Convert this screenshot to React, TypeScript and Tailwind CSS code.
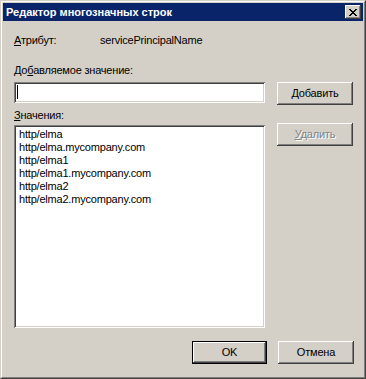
const raised =
  'shadow-[inset_-1px_-1px_#404040,inset_1px_1px_#ffffff,inset_-2px_-2px_#808080,inset_2px_2px_#d4d0c8]';
const sunken =
  'shadow-[inset_1px_1px_#808080,inset_-1px_-1px_#ffffff,inset_2px_2px_#404040,inset_-2px_-2px_#d4d0c8]';

const values = [
  'http/elma',
  'http/elma.mycompany.com',
  'http/elma1',
  'http/elma1.mycompany.com',
  'http/elma2',
  'http/elma2.mycompany.com',
];

const CloseGlyph = () => (
  <svg width="8" height="7" viewBox="0 0 8 7" shapeRendering="crispEdges">
    <path
      fill="#000"
      d="M0 0h2v1H0zM6 0h2v1H6zM1 1h2v1H1zM5 1h2v1H5zM2 2h4v1H2zM3 3h2v1H3zM2 4h4v1H2zM1 5h2v1H1zM5 5h2v1H5zM0 6h2v1H0zM6 6h2v1H6z"
    />
  </svg>
);

const Button = ({
  children,
  disabled,
  isDefault,
  className = '',
}: {
  children: React.ReactNode;
  disabled?: boolean;
  isDefault?: boolean;
  className?: string;
}) => {
  if (isDefault) {
    return (
      <div className={`h-[23px] w-[75px] border border-black ${className}`}>
        <div className="flex h-full w-full items-center justify-center bg-[#d4d0c8] shadow-[inset_-1px_-1px_#404040,inset_1px_1px_#ffffff,inset_-2px_-2px_#808080]">
          {children}
        </div>
      </div>
    );
  }
  return (
    <div
      className={`flex h-[23px] w-[76px] items-center justify-center bg-[#d4d0c8] ${raised} ${
        disabled ? 'text-[#808080] [text-shadow:1px_1px_0_#ffffff]' : ''
      } ${className}`}
    >
      {children}
    </div>
  );
};

const App = () => {
  return (
    <div
      className="h-[379px] w-[366px] border border-t-[#d4d0c8] border-l-[#d4d0c8] border-b-[#404040] border-r-[#404040] text-[11px] leading-[13px] text-black"
      style={{ fontFamily: '"Liberation Sans", Arial, sans-serif' }}
    >
      <div className="h-full w-full border border-t-white border-l-white border-b-[#808080] border-r-[#808080] bg-[#d4d0c8] p-[1px]">
        {/* title bar */}
        <div className="flex h-[18px] items-center justify-between bg-[#0a246a] pl-[3px] pr-[2px]">
          <span className="font-bold text-white">Редактор многозначных строк</span>
          <div className={`flex h-[14px] w-[16px] items-center justify-center bg-[#d4d0c8] ${raised}`}>
            <CloseGlyph />
          </div>
        </div>

        {/* client */}
        <div className="flex flex-col pl-[11px] pt-[13px] tracking-[-0.2px]">
          <div className="flex">
            <span className="w-[86px]">
              <u>А</u>трибут:
            </span>
            <span>servicePrincipalName</span>
          </div>

          <div className="mt-[17px]">
            До<u>б</u>авляемое значение:
          </div>

          <div className="mt-[5px] flex items-start">
            <div className={`h-[21px] w-[251px] bg-white ${sunken} pl-[3px] pt-[3px]`}>
              <div className="h-[14px] w-px bg-black" />
            </div>
            <Button className="ml-[12px]">
              <span>
                <u>Д</u>обавить
              </span>
            </Button>
          </div>

          <div className="mt-[4px]">
            <u>З</u>начения:
          </div>

          <div className="mt-[3px] flex items-start">
            <div className={`h-[203px] w-[251px] bg-white ${sunken} px-[5px] pt-[3px]`}>
              {values.map((v) => (
                <div key={v}>{v}</div>
              ))}
            </div>
            <Button disabled className="ml-[12px] -mt-[2px]">
              <span>
                <u>У</u>далить
              </span>
            </Button>
          </div>

          <div className="mt-[13px] flex pl-[178px]">
            <Button isDefault>OK</Button>
            <Button className="ml-[11px]">Отмена</Button>
          </div>
        </div>
      </div>
    </div>
  );
};

export default App;
